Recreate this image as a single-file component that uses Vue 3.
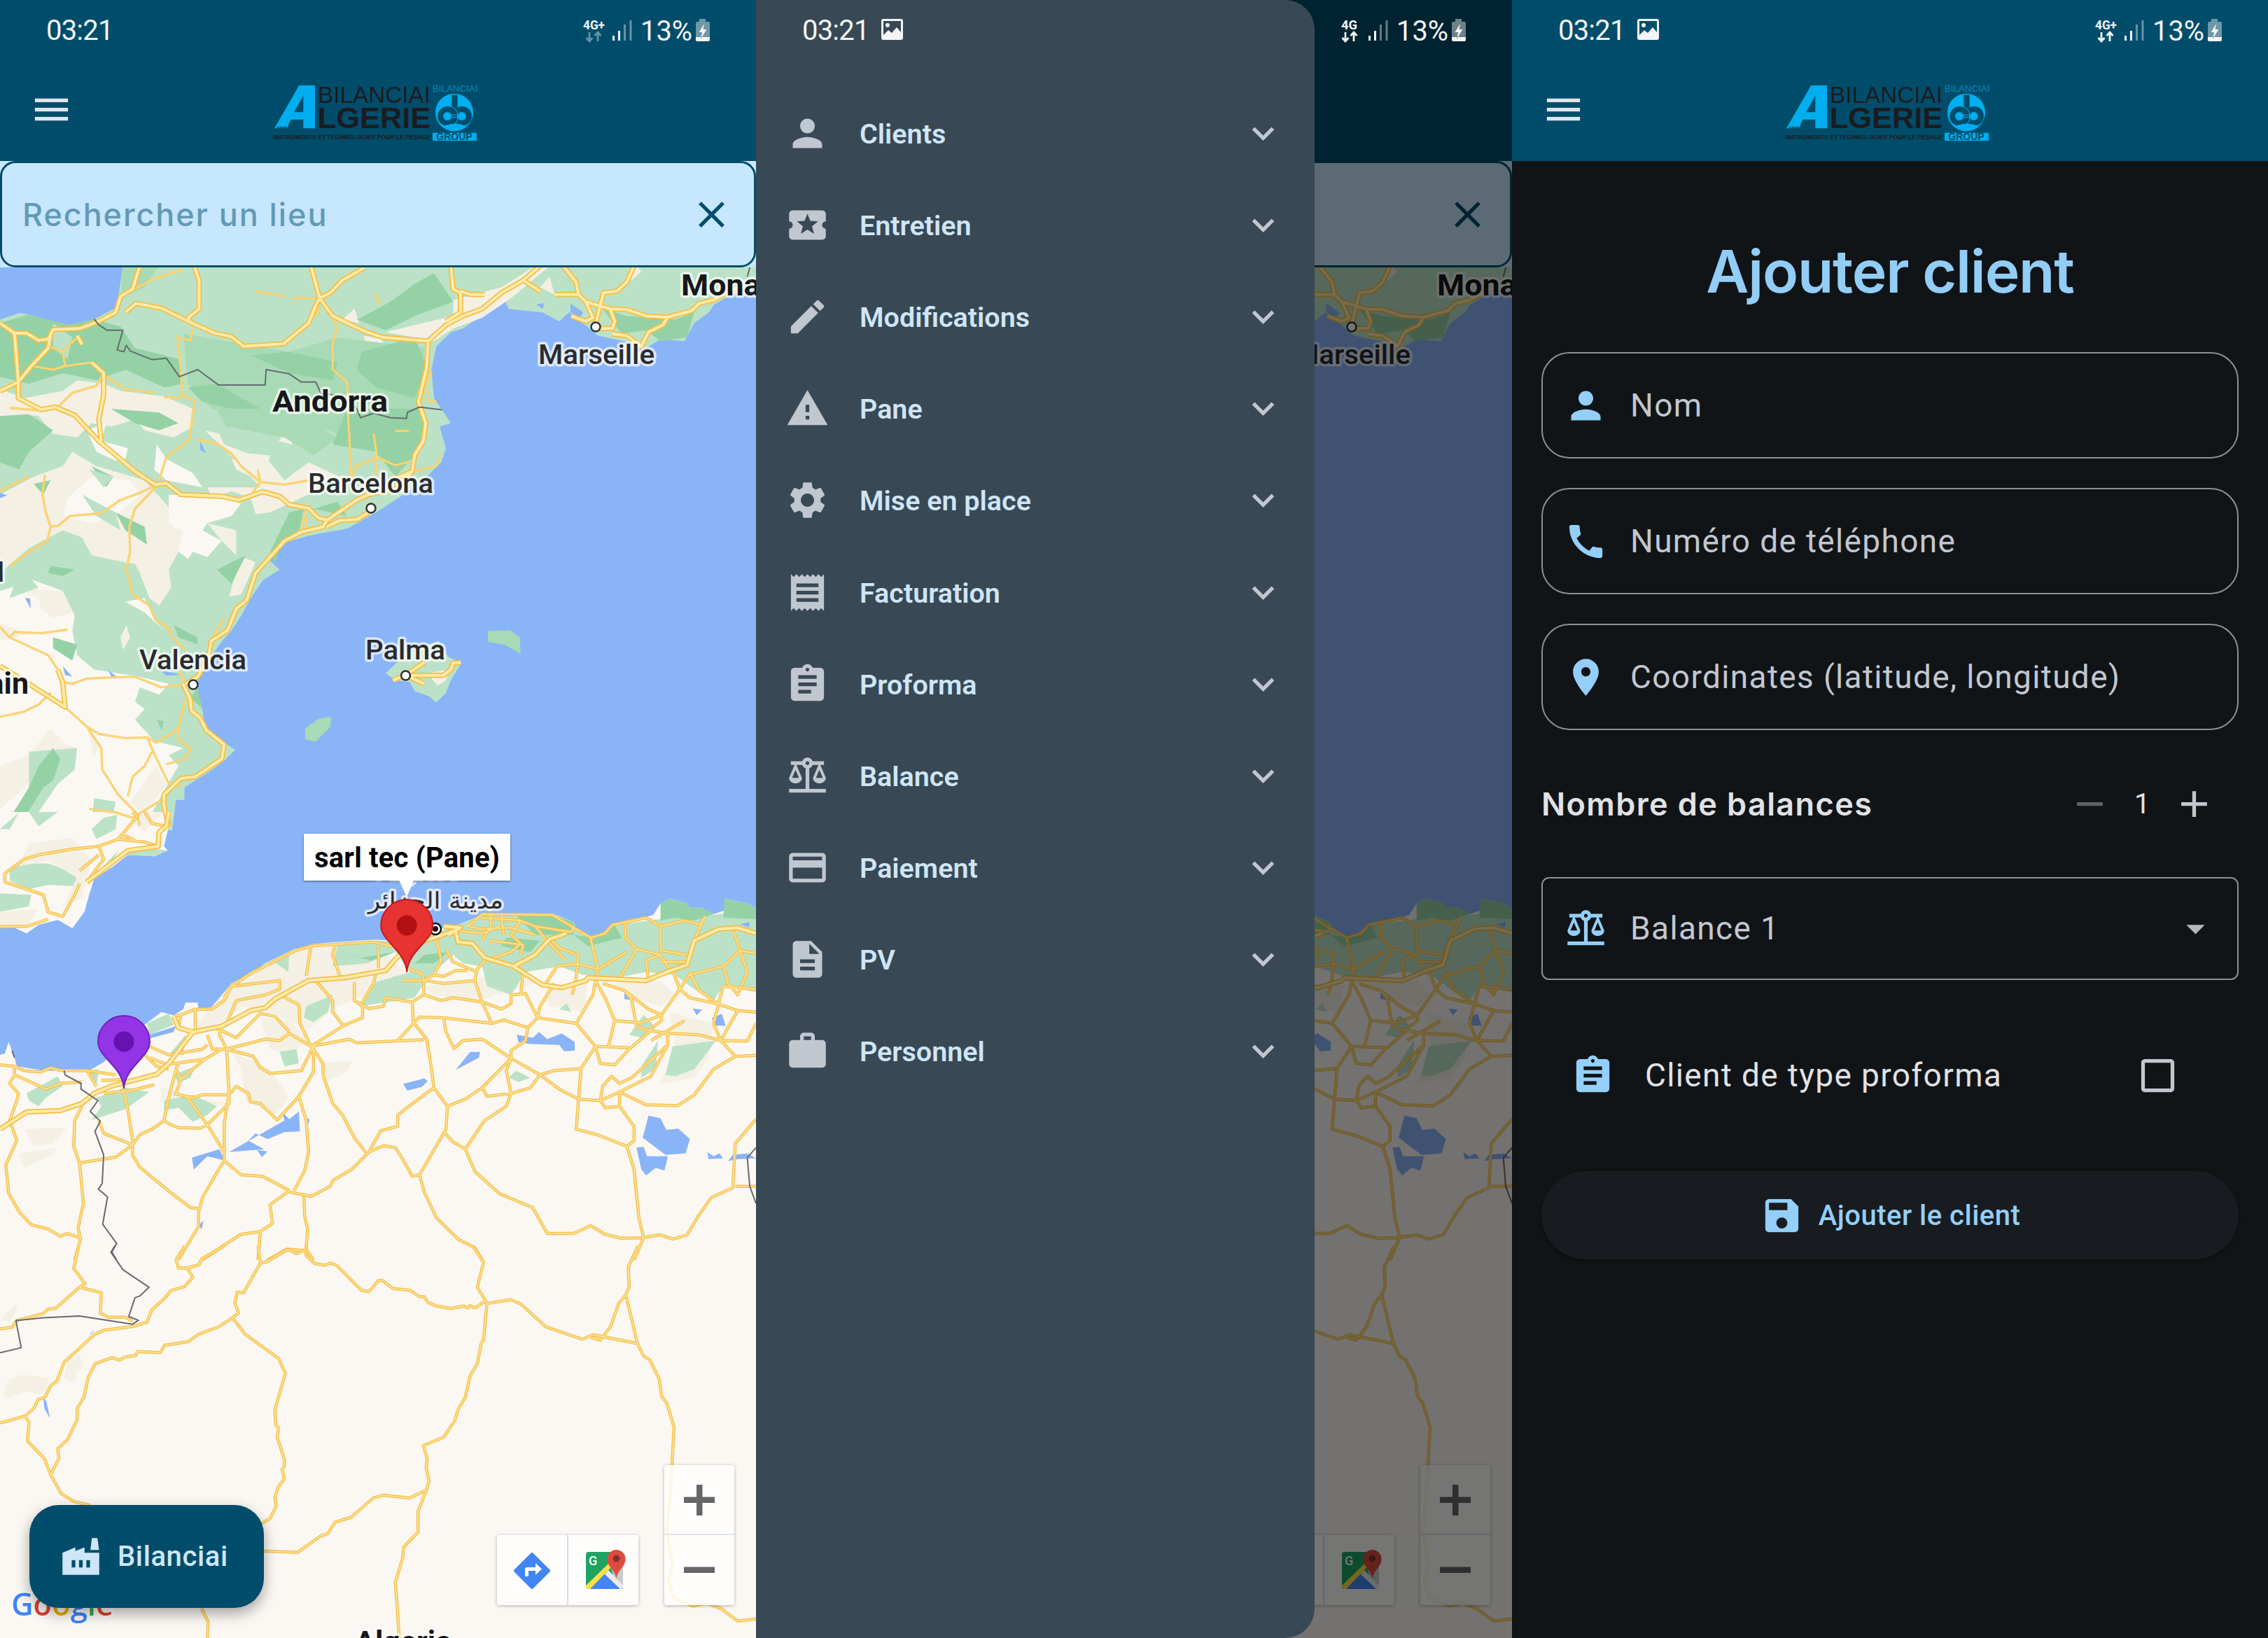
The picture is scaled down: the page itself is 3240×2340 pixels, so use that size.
<script setup>
const screens = [
  { id: 'map', picture: false, net: '4G+', idle: true },
  { id: 'drawer', picture: true, net: '4G', idle: false },
  { id: 'form', picture: true, net: '4G+', idle: false },
]

const icons = {
  person: 'M12 12c2.21 0 4-1.79 4-4s-1.79-4-4-4-4 1.79-4 4 1.79 4 4 4zm0 2c-2.67 0-8 1.34-8 4v2h16v-2c0-2.66-5.33-4-8-4z',
  ticket: 'M20 12c0-1.1.9-2 2-2V6c0-1.1-.9-2-2-2H4c-1.1 0-1.99.9-1.99 2v4c1.1 0 1.99.9 1.99 2s-.89 2-2 2v4c0 1.1.9 2 2 2h16c1.1 0 2-.9 2-2v-4c-1.1 0-2-.9-2-2zm-4.42 4.8L12 14.5l-3.58 2.3 1.08-4.12-3.29-2.69 4.24-.25L12 5.8l1.54 3.95 4.24.25-3.29 2.69 1.09 4.11z',
  edit: 'M3 17.25V21h3.75L17.81 9.94l-3.75-3.75L3 17.25zM20.71 7.04c.39-.39.39-1.02 0-1.41l-2.34-2.34c-.39-.39-1.02-.39-1.41 0l-1.83 1.83 3.75 3.75 1.83-1.83z',
  warning: 'M1 21h22L12 2 1 21zm12-3h-2v-2h2v2zm0-4h-2v-4h2v4z',
  settings: 'M19.14 12.94c.04-.3.06-.61.06-.94 0-.32-.02-.64-.07-.94l2.03-1.58c.18-.14.23-.41.12-.61l-1.92-3.32c-.12-.22-.37-.29-.59-.22l-2.39.96c-.5-.38-1.03-.7-1.62-.94l-.36-2.54c-.04-.24-.24-.41-.48-.41h-3.84c-.24 0-.43.17-.47.41l-.36 2.54c-.59.24-1.13.57-1.62.94l-2.39-.96c-.22-.08-.47 0-.59.22L2.74 8.87c-.12.21-.08.47.12.61l2.03 1.58c-.05.3-.09.63-.09.94s.02.64.07.94l-2.03 1.58c-.18.14-.23.41-.12.61l1.92 3.32c.12.22.37.29.59.22l2.39-.96c.5.38 1.03.7 1.62.94l.36 2.54c.05.24.24.41.48.41h3.84c.24 0 .44-.17.47-.41l.36-2.54c.59-.24 1.13-.56 1.62-.94l2.39.96c.22.08.47 0 .59-.22l1.92-3.32c.12-.22.07-.47-.12-.61l-2.01-1.58zM12 15.6c-1.98 0-3.6-1.62-3.6-3.6s1.62-3.6 3.6-3.6 3.6 1.62 3.6 3.6-1.62 3.6-3.6 3.6z',
  receipt: 'M18 17H6v-2h12v2zm0-4H6v-2h12v2zm0-4H6V7h12v2zM3 22l1.5-1.5L6 22l1.5-1.5L9 22l1.5-1.5L12 22l1.5-1.5L15 22l1.5-1.5L18 22l1.5-1.5L21 22V2l-1.5 1.5L18 2l-1.5 1.5L15 2l-1.5 1.5L12 2l-1.5 1.5L9 2 7.5 3.5 6 2 4.5 3.5 3 2v20z',
  clipboard: 'M19 3h-4.18C14.4 1.84 13.3 1 12 1c-1.3 0-2.4.84-2.82 2H5c-1.1 0-2 .9-2 2v14c0 1.1.9 2 2 2h14c1.1 0 2-.9 2-2V5c0-1.1-.9-2-2-2zm-7 0c.55 0 1 .45 1 1s-.45 1-1 1-1-.45-1-1 .45-1 1-1zm2 14H7v-2h7v2zm3-4H7v-2h10v2zm0-4H7V7h10v2z',
  balance: 'M13 7.83c.85-.3 1.53-.98 1.83-1.83H18l-3 7c0 1.66 1.57 3 3.5 3s3.5-1.34 3.5-3l-3-7h2V4h-6.17c-.41-1.17-1.52-2-2.83-2s-2.42.83-2.83 2H3v2h2l-3 7c0 1.66 1.57 3 3.5 3S9 14.66 9 13L6 6h3.17c.3.85.98 1.53 1.83 1.83V19H2v2h20v-2h-9V7.83zM20.37 13h-3.74l1.87-4.36L20.37 13zm-13 0H3.63L5.5 8.64 7.37 13zM12 6c-.55 0-1-.45-1-1s.45-1 1-1 1 .45 1 1-.45 1-1 1z',
  card: 'M20 4H4c-1.11 0-1.99.89-1.99 2L2 18c0 1.11.89 2 2 2h16c1.11 0 2-.89 2-2V6c0-1.11-.89-2-2-2zm0 14H4v-6h16v6zm0-10H4V6h16v2z',
  document: 'M14 2H6c-1.1 0-1.99.9-1.99 2L4 20c0 1.1.89 2 1.99 2H18c1.1 0 2-.9 2-2V8l-6-6zm2 16H8v-2h8v2zm0-4H8v-2h8v2zm-3-5V3.5L18.5 9H13z',
  work: 'M20 6h-4V4c0-1.11-.89-2-2-2h-4c-1.11 0-2 .89-2 2v2H4c-1.11 0-1.99.89-1.99 2L2 19c0 1.11.89 2 2 2h16c1.11 0 2-.89 2-2V8c0-1.11-.89-2-2-2zm-6 0h-4V4h4v2z',
  chevron: 'M16.59 8.59L12 13.17 7.41 8.59 6 10l6 6 6-6z',
  phone: 'M20.01 15.38c-1.23 0-2.42-.2-3.53-.56-.35-.12-.74-.03-1.01.24l-1.57 1.97c-2.83-1.35-5.48-3.9-6.89-6.83l1.95-1.66c.27-.28.35-.67.24-1.02-.37-1.11-.56-2.3-.56-3.53 0-.54-.45-.99-.99-.99H4.19C3.65 3 3 3.24 3 3.99 3 13.28 10.73 21 20.01 21c.71 0 .99-.63.99-1.18v-3.45c0-.54-.45-.99-.99-.99z',
  pin: 'M12 2C8.13 2 5 5.13 5 9c0 5.25 7 13 7 13s7-7.75 7-13c0-3.87-3.13-7-7-7zm0 9.5c-1.38 0-2.5-1.12-2.5-2.5s1.12-2.5 2.5-2.5 2.5 1.12 2.5 2.5-1.12 2.5-2.5 2.5z',
  save: 'M17 3H5c-1.11 0-2 .9-2 2v14c0 1.1.89 2 2 2h14c1.1 0 2-.9 2-2V7l-4-4zm-5 16c-1.66 0-3-1.34-3-3s1.34-3 3-3 3 1.34 3 3-1.34 3-3 3zm3-10H5V5h10v4z',
  menu: 'M3 18h18v-2H3v2zm0-5h18v-2H3v2zm0-7v2h18V6H3z',
  close: 'M19 6.41L17.59 5 12 10.59 6.41 5 5 6.41 10.59 12 5 17.59 6.41 19 12 13.41 17.59 19 19 17.59 13.41 12z',
  factory: 'M22 22H2V10l7-3v2l5-2v3h8v12zM21.9 8.5h-4.7L18 2h3l.9 6.5zM11 18h2v-4h-2v4zm-4 0h2v-4H7v4zm10-4h-2v4h2v-4z',
  minus: 'M19 13H5v-2h14v2z',
  plus: 'M19 13h-6v6h-2v-6H5v-2h6V5h2v6h6v2z',
  caret: 'M7 10l5 5 5-5z',
  checkbox: 'M19 5v14H5V5h14m0-2H5c-1.1 0-2 .9-2 2v14c0 1.1.9 2 2 2h14c1.1 0 2-.9 2-2V5c0-1.1-.9-2-2-2z',
}

const menu = [
  ['person', 'Clients'],
  ['ticket', 'Entretien'],
  ['edit', 'Modifications'],
  ['warning', 'Pane'],
  ['settings', 'Mise en place'],
  ['receipt', 'Facturation'],
  ['clipboard', 'Proforma'],
  ['balance', 'Balance'],
  ['card', 'Paiement'],
  ['document', 'PV'],
  ['work', 'Personnel'],
]

const fields = [
  ['person', 'Nom'],
  ['phone', 'Numéro de téléphone'],
  ['pin', 'Coordinates (latitude, longitude)'],
]

// The map is split into three horizontal bands, each with its own scale.
const bands = [
  {
    id: 'spain',
    transform: 'matrix(.68878 0 0 .5102 0 380)',
    areas: [
      ['#bbe2c6', 'M255 0L242 115 195 150 140 165 60 135 40 132 0 150V1580H357L365 1495H382L383 1460 400 1445 440 1410 465 1385 488 1355 460 1330 425 1290 420 1240 405 1170 435 1100 455 1060 480 1020 500 980 520 930 545 880 580 850 560 825 590 775 640 755 720 735 780 690 860 620 885 590 915 550 925 510 912 450 935 440 915 400 900 370 895 290 905 225 935 185 960 175 1010 130 1045 90 1055 120 1125 130 1160 155 1180 130 1205 155 1240 195 1310 215 1340 230 1370 205 1420 210 1440 160 1470 130 1480 110 1510 85 1568 60V0z'],
      ['#f4f0e4', 'M0 345L50 370 130 350 160 320 215 330 250 350 340 365 375 385 400 400 400 450 360 480 300 460 280 430 230 450 190 440 160 480 110 470 80 420 0 410zM200 560L150 520 130 560 70 590 0 640V860L60 790 130 740 170 760 190 810 260 830 350 850 365 790 350 750 360 690 300 600 250 580z'],
      ['#fbf8f3', 'M180 460L220 440 210 490 265 510 260 540 240 545 200 520zM325 500L345 540 400 580 420 620 345 600 320 570zM140 650L190 590 270 600 290 640 240 700 190 720 130 700zM350 640L460 650 500 665 480 700 430 720 420 740 460 770 430 815 400 800 390 820 360 790 375 750 350 720z'],
      ['#f4f0e4', 'M480 540L560 550 590 600 640 550 720 600 690 590 640 640 560 690 530 695 520 650 480 630 440 650 430 620 540 620 520 590 490 570zM425 460L455 470 465 500 515 525 560 530 555 565 500 555 470 520zM300 700L380 740 370 800 350 850 355 900 330 950 310 930 290 860 275 820zM0 410L40 400 60 420 0 430zM430 720L490 740 490 810 460 770z'],
      ['#fbf8f3', 'M0 910L70 880 130 910 155 980 150 1020 160 1090 195 1130 290 1150 350 1170 330 1200 290 1180 280 1220 300 1240 280 1270 320 1330 380 1350 350 1370 370 1400 340 1470 300 1568H0zM260 940L300 930 320 990 340 1020 300 970z'],
      ['#f4f0e4', 'M80 930L30 900 130 910 150 970 110 985 85 960zM262 1005L270 1040 255 1075 250 1040zM505 815L530 830 500 920 475 925 485 880zM0 1000L60 1030 0 1050zM0 1400L60 1370 100 1300 110 1300 135 1340 160 1350 150 1400 60 1450 0 1520zM325 1400L345 1450 300 1540 270 1500zM180 1290L210 1340 195 1370zM0 1540L60 1500 90 1568H0z'],
      ['#f4f0e4', 'M800 185L860 165 940 140 940 95 1040 60 1110 0 1140 0 1060 90 1000 145 940 175 900 210 860 200zM590 470L608 480 605 500 578 490zM735 120L745 160 710 150zM755 195L790 205 800 225 760 240zM1150 80L1140 30 1120 60zM1320 0L1330 15 1310 40 1300 30z'],
      ['#a8dab5', 'M380 190L600 240 700 200 880 230 870 380 840 470 700 470 600 420 440 400 390 330zM255 0L330 0 300 60 250 90zM440 380L600 400 700 480 650 530 590 480 470 450z'],
      ['#94d2a5', 'M0 160L60 135 140 165 195 150 250 170 280 230 370 260 380 330 340 340 260 290 200 320 130 300 60 330 0 310zM390 340L450 330 540 400 480 400 420 380zM520 250L600 240 700 270 690 320 600 300zM750 240L860 200 885 280 860 370 780 340 740 290zM720 400L880 400 880 500 820 590 780 520 690 500zM0 420L60 415 110 460 60 520 40 570 0 550zM740 150L810 100 860 50 900 20 940 100 860 140 800 180zM230 400L330 410 370 440 330 460 280 440zM1250 120L1300 140 1400 150 1440 130 1425 200 1370 210 1340 180 1290 190zM600 690L630 680 620 745 590 760 570 830 560 800zM240 690L300 730 305 780 260 740zM70 610L105 600 90 640zM105 840L155 850 130 868 100 860zM360 1005L410 1040 410 1060 370 1040zM110 1040L160 1060 150 1105 110 1070zM190 560L235 590 220 620zM510 810L480 890 450 850zM325 1270L340 1275 335 1300zM410 1180L420 1240 395 1210zM700 660L720 700 650 680z'],
      ['#bbe2c6', 'M60 1360L160 1350 155 1410 120 1450 60 1568H20L60 1470zM195 1490L240 1500 230 1568H190zM170 640L240 690 250 740 200 700zM60 870L80 900 20 930 30 890zM185 570L235 590 215 620zM110 160L150 200 140 260 110 230zM240 460L275 480 260 500z'],
      ['#94d2a5', 'M110 1350L125 1380 110 1440 90 1460 40 1568H10L60 1460 80 1400z'],
      ['#bbe2c6', 'M800 1140L850 1075 910 1050 930 1095 958 1110 935 1160 925 1195 905 1222 890 1205 860 1190 850 1165 820 1160z'],
      ['#f4f0e4', 'M885 1140L930 1130 925 1160 908 1175z'],
      ['#a8dab5', 'M1012 1022L1058 1020 1078 1040 1080 1085 1045 1060 1012 1052zM633 1295L660 1268 687 1262 685 1290 655 1332 633 1325z'],
      ['#8ab4f8', 'M415 490L428 525 415 515zM52 930L62 930 64 960zM130 1120L150 1150 135 1145zM225 1132L242 1150 232 1155zM330 1130L375 1145 345 1147zM0 635L15 642 0 650zM1183 105L1210 130 1200 150 1183 130zM1112 108L1128 104 1126 120z'],
    ],
    minor: 'M120 1130L100 1090 20 1040 0 1010M20 1040L30 1025 85 1028 140 1018M135 1235L180 1290 205 1310 260 1322 305 1320 325 1335 370 1295 385 1215M370 1295L372 1330 395 1350 385 1380 345 1395M305 1320L325 1380 350 1450 375 1455M180 1290L210 1350 212 1410 245 1480 285 1535 290 1568M185 1520L240 1530 275 1545 335 1495M315 1360L300 1400 275 1430 265 1485M130 1165L150 1170 180 1155 230 1152 280 1150 335 1180 390 1170M0 1262L50 1248 80 1228 105 1195M322 615L290 635 250 655 210 692 145 700 120 728 105 730 98 770 60 800 20 840M105 730L95 690 88 640 93 585M0 630L60 590M322 620L280 680 268 730 270 800 262 850 275 920 310 950 322 990 350 1015 355 1035 385 1075M330 600L345 535 393 485 400 410 405 380 378 360 375 290 368 200 395 208 400 175M410 487L450 497 480 525 500 560 540 605 525 632M540 605L535 570M540 605L590 612 640 600M692 140L698 175 690 220 690 290 720 325 722 420 728 560 728 600M775 470L782 535 740 560 728 600M782 535L820 558 850 548M780 535V590M820 462L848 462M210 300L260 345 320 355M340 368H378M20 397L85 405M120 395L150 355 200 335 215 300M530 70L590 85M605 90L663 90 658 140M778 75L788 108M250 85L320 35 380 10M65 280L110 290 135 280 190 270M135 280L130 240 100 225M160 200L130 240M855 575L905 560 912 535M870 370L905 380M885 290L895 300 880 340 890 360M625 745L632 690 638 745M465 985L438 1050M370 1130L385 1170',
    major: 'M0 160L30 188 55 188 80 208 100 205 110 178 165 175 205 155 240 130 250 85 275 65 290 0M260 130L282 105 335 118 395 158 445 188 480 198 505 225 588 218 640 160 655 110 663 90M645 0L663 90M755 5L710 40 685 75 663 90 690 140 760 185 795 200 888 210M403 0L413 40V120L390 145 395 158M1120 0L1085 40 1040 75 1000 120 960 140 925 165 888 210 885 285 868 380 883 440 878 490 860 530 855 575 820 595M935 0L940 65 955 75V130L925 155M955 70L975 80H1005M1085 40L1120 70M1150 80H1200L1215 100 1265 120 1300 122 1340 140 1385 143 1435 125 1450 105 1480 95 1530 60M1168 0L1195 45 1200 80M1315 0L1300 45 1280 70 1252 75 1245 110 1235 165M1185 140L1215 155 1230 145 1215 100M1240 175L1270 175 1275 155 1265 120M1270 190L1300 195 1330 225 1345 185 1375 165 1385 143M30 188L35 270 38 325 38 370 85 402 115 395 155 418 205 490 280 575 322 612 345 608 375 640 460 645 495 655 545 632 580 645 600 668 640 678 660 705 678 712 740 655 765 640 820 625 855 575M38 325L65 280 100 230 105 195M38 325L0 350M160 195L170 220M190 270L215 300V360L205 430 210 490M678 712L670 730 625 745 590 770 530 860 512 935 490 960 472 1020 438 1050 432 1100 410 1150 385 1170M678 730L705 712 740 710 765 690M380 1170L395 1215 397 1245 415 1265 428 1300 465 1340 460 1380 405 1430 375 1435 340 1480V1510L350 1568M0 1120L60 1170 135 1235 130 1165 120 1130M815 1160L841 1146 880 1110M841 1146H920L935 1130 940 1112 955 1110M841 1146L880 1170',
    border: 'M195 148L205 165 222 180 255 180 243 235 257 240 262 222 270 238 315 262 345 258 372 310 410 290 453 333H550L552 290 600 302 625 325 655 325 665 355 710 365 740 400 748 425 775 412 810 425 843 427 845 410 870 395 917 403M1550 30L1556 0',
  },
  {
    id: 'algeria',
    transform: 'matrix(.68878 0 0 .40816 0 1160)',
    areas: [
      ['#fbf8f3', 'M357 0L340 120 348 135 320 155 265 150 235 190 195 235 185 290 175 350 150 407 120 378 80 395 55 425 30 405H0V0z'],
      ['#bbe2c6', 'M20 200L50 180 100 180 160 215 155 260 100 255 60 270 20 240zM0 285L65 290 60 330 0 350zM190 60L215 20 243 10 240 60 200 95zM0 60L40 0 20 60zM60 0H120L80 50zM215 190L245 135 232 180zM255 150L300 125 348 135 320 155z'],
      ['#f4f0e4', 'M60 110L150 90 190 170 170 300 130 330 160 230 100 170 40 190zM0 350L80 340 60 390 0 400zM255 10L340 0 300 70z'],
      ['#fbf8f3', 'M0 850L10 845 18 805 30 860 35 890 90 905 130 905 180 910 215 875 240 840 255 780 300 745 335 700 360 712 380 690 385 667H410L412 690 450 680 465 640 480 600 520 565 550 530 610 480 650 462 700 455 775 447 830 450 900 435 905 415 935 395 970 395 1000 355H1145L1190 385 1195 415 1230 440 1255 425 1275 395 1320 378 1355 360 1370 320 1390 303 1425 320 1430 335 1455 335 1480 358 1510 340 1503 303 1550 320 1568 340V3000H0z'],
      ['#f4f0e4', 'M480 600L520 565 610 480 780 460 840 560 760 640 700 680 640 760 560 700 500 680 460 740 400 760zM540 720L600 730 640 800 600 850 560 830zM480 840L560 900 600 1000 570 1060 510 1010 500 900zM660 880L730 870 720 910 680 940zM50 1110L138 1105 110 1160 70 1170zM40 1195L120 1175 110 1200 50 1245zM880 610L1080 560 1110 600 990 660 900 640zM1130 620L1220 600 1210 700 1140 680zM1270 600L1370 590 1400 640 1370 680 1300 640zM1390 700L1480 740 1470 860 1440 930 1370 950 1400 820zM330 960L400 1000 480 1020 400 1040 340 1020z'],
      ['#bbe2c6', 'M700 465L780 450 850 455 940 400 1000 360 1145 357 1190 385 1195 415 1230 440 1275 395 1370 375 1400 340 1480 360 1568 340V630L1500 610 1480 660 1440 620 1400 570 1340 560 1280 580 1210 570 1160 540 1090 560 1060 640 1010 610 1000 540 960 530 940 500 900 560 880 600 860 650 750 680 770 600 850 560 820 490 760 530 690 540zM635 680L690 640 680 700 650 735 630 720zM565 520L600 490 598 560zM305 740L350 705 360 745 310 780zM200 1000L260 965 310 980 260 1040 190 1078 210 1030zM340 1010L400 990 450 1030 430 1060 400 1085 370 1035 340 1045zM55 985L120 925 130 960 95 1000 80 1030 60 1010zM180 910L205 900 200 960zM1335 710L1355 745 1330 790 1305 780zM1330 890L1365 800 1360 900 1330 930zM1395 820L1485 800 1440 900 1400 925 1380 920zM1055 930L1070 905 1100 930 1075 945zM1160 690L1175 670 1185 700zM580 840L615 830 620 880 590 890zM360 920L405 890 395 930 370 950zM350 850L385 780 380 850z'],
      ['#94d2a5', 'M1370 380L1370 320 1390 303 1425 320 1430 335 1455 335 1480 358 1440 380 1400 370zM1503 303L1550 320 1568 340V375L1500 370zM1070 360H1145L1190 385 1190 430 1110 430zM1190 430L1230 440 1275 395 1290 440 1220 470zM1050 440L1120 450 1100 490 1040 470zM880 500L930 490 900 530 860 530zM700 490L770 520 820 490 750 510z'],
      ['#8ab4f8', 'M310 780L365 750 360 770 312 792zM475 1190L590 1080 585 1050 600 1075 620 1048 622 1118 590 1120 555 1145 530 1125 515 1150 548 1180zM398 1210L455 1180 467 1220 430 1205 402 1252zM533 1182L555 1188 543 1208zM632 1070L642 1075 640 1092zM1072 780L1105 790 1118 770 1135 795 1165 775 1192 805V835L1170 838 1160 815 1100 812 1075 805zM945 903L975 840 996 840 993 860zM836 952L880 932 887 942 875 962 845 975zM1345 1063L1370 1072 1382 1113 1407 1108 1431 1145 1422 1195 1380 1200 1333 1140zM1320 1175L1335 1172 1342 1205 1385 1205 1382 1230 1378 1255 1360 1245 1340 1272 1330 1250zM1467 1190L1480 1205 1492 1195 1500 1212 1470 1215zM1510 1222L1520 1200 1550 1195 1568 1212 1530 1215zM1295 630L1305 635 1308 658 1295 655zM1437 688L1456 692 1445 712zM1477 720L1497 706 1505 748 1480 748zM1535 392L1555 385 1553 405zM413 1445L422 1430 418 1462z'],
    ],
    minor: 'M465 650L480 610 520 565 555 535 615 483 650 468 775 455 825 475M645 470L635 575M695 465L690 500 705 575M785 470V545M405 690L375 710 360 715M405 690L440 690 465 660 480 610 580 590V620L550 640 490 660 470 740M405 690L405 770M375 710L370 755M0 885L30 890 50 905 85 910 105 895 125 905 180 905 200 960M30 890V920L70 950 95 970 125 950 170 945M30 920L20 950 38 985 35 1010 20 1080 35 1150 12 1235 18 1335 40 1400 65 1445 100 1460 125 1485 140 1475 165 1490M170 1030L155 1080 153 1170 165 1230 173 1370 162 1455 167 1495 155 1568M255 965L265 1040 275 1150 275 1200 290 1243 320 1285 360 1340 395 1385 412 1388M205 1080L215 1125 275 1165 240 1208 165 1228M275 1165L290 1130 315 1110 340 1080 355 1095 370 1105 415 1107 430 1095 475 1020 475 985 470 830M340 1080L350 1000 365 900 370 880M365 985L390 1000 430 1095 465 1190 465 1220 500 1270 545 1275 600 1325M465 1220L440 1290 420 1350 412 1400 412 1450 370 1568M475 985L465 1090V1220M360 985L400 1000 420 990 475 990 490 960 515 985 520 1015 540 1020 575 1078 620 995 650 910V820M470 830L550 795 580 800 600 775 645 820M470 830L525 855 540 895 560 915 625 905 650 820M440 750L490 790 540 705 570 715 600 770M470 830L455 780 460 750M580 640L620 675 622 740 645 820M655 590L690 660V700L712 748 645 820M712 748L752 720V680L735 660V595M645 820L725 795 740 808 880 797M650 830L670 880V920L690 1020 710 1060 735 1140 760 1195M620 995L635 1080 640 1190 632 1255 610 1325M825 800L860 735 870 718 920 720 1020 740 1045 728 1095 755M855 665L857 735 885 795 895 900 900 965 928 1030 925 1110 870 1270M855 665L800 650 795 680 765 688 735 660M780 560L775 600 750 670M900 965L840 1040 825 1060V1100L790 1115 765 1190M765 1190L795 1168 820 1175 835 1215 855 1275 870 1270 880 1330 905 1420 950 1495 985 1525 1000 1568M765 1190L730 1250 690 1290 685 1310 645 1345 600 1330M600 1325L560 1375 565 1440 540 1468 500 1478 470 1510 420 1568M630 1345L632 1415 638 1460 635 1530 650 1568M540 1468L535 1568M555 1568L595 1530 635 1535M920 720L925 770 942 828 960 800 1000 795 1060 862 1060 835 1090 800 1095 755 1115 720 1120 680 1150 600M920 1120L940 1155 965 1180 985 1258 1035 1335 1105 1385 1135 1475 1190 1475 1225 1448 1255 1478 1290 1492 1330 1490 1370 1480 1395 1495 1425 1480 1450 1410 1475 1350 1520 1315 1525 1160 1568 1075M928 1030L965 1005 1000 965 1060 862 1050 905 1060 985 1050 1030 1005 1080 965 1180M1000 965L1010 995 1060 985 1100 965 1120 920 1060 862M1120 920L1150 905 1205 898 1235 820 1195 740 1115 720M1120 920L1160 970 1200 1005 1195 1110 1240 1130 1300 1170 1315 1250 1325 1420 1335 1490 1315 1568M1205 898L1200 1005 1245 1010 1285 980 1340 1025 1405 1028 1440 990 1480 900 1525 855 1568 852M1245 1010L1250 960 1268 925 1285 950 1310 930 1385 815 1385 775 1350 765 1305 830 1275 885 1245 880 1235 820M1285 980L1350 925 1385 815M1285 980V1030L1315 1100V1150L1300 1170M1245 1010L1255 1035 1285 1030M1235 820L1305 825M1195 740L1230 640 1235 590M1235 590L1255 650 1275 730 1262 820M1250 600L1295 625 1345 690 1372 710 1372 730 1345 765M1275 730L1330 738 1372 710 1410 620 1395 555M1295 625L1310 655 1320 750 1345 765M1385 775L1450 780 1495 800 1525 855M1410 620L1430 650 1490 672 1530 695 1568 700M1495 800L1530 695M1495 800L1550 802 1568 740M1490 672L1480 740 1495 800M1430 560L1450 625 1490 672 1500 610 1568 620M880 590L878 640 855 665M835 590H880L920 600 985 590 1000 665 1020 740M880 640L915 660 940 650 1000 665 1040 690 1060 670V640L1090 635 1115 720M985 590L990 550 1005 520M905 440L915 520 900 570 880 590M970 555L945 555 920 575 900 570M850 550L875 565 880 590M925 480L940 525 990 560M1085 560L1080 640M1000 370L1080 380 1110 400 1185 420 1190 405 1145 360 1000 358 970 400M1018 360V400L1000 450M1080 380L1060 430 1080 460 1060 490 1015 515M1110 400L1130 440 1170 515M970 400L1000 410 1060 405 1110 430M1015 450L1085 465 1080 500M950 415L1000 425 1035 400M1040 360L1045 430M1190 405L1225 440 1255 425 1270 395 1340 370 1370 400 1420 380 1455 395 1462 365M1297 385V440L1320 480 1300 540 1280 590M1370 400V485L1425 500M1225 440L1230 480 1240 550 1235 590M1440 450L1462 365M1520 410L1535 485 1500 540 1430 570 1410 620M1535 485L1568 495M1535 485L1550 560 1530 640 1510 600 1500 540M1320 480L1370 500 1340 520 1345 590M1300 490L1240 550M1195 530L1240 550M1140 445L1165 480 1200 500 1195 580 1187 640M1370 500L1390 555M1370 525L1425 525M1155 540L1200 530M1130 605L1155 540M275 0L285 15 245 95 205 120 150 130 85 148 50 165 10 215V245L90 290 100 350 130 365 155 290 165 250M205 120L215 165 180 245M0 402L55 400 100 375M300 0L315 40 345 50M245 95L300 105 328 120M255 80L280 100M165 205L205 150M310 820L350 850 420 830 430 815M310 860L340 880 365 880 425 865 460 830M300 850L325 890 350 900M180 905L240 920M210 940L260 935M320 955L270 975 215 985M365 900L375 935 365 985M425 865L375 935M430 780L440 830 470 830M1350 800L1420 730M1525 1310H1568',
    major: 'M0 1110L55 1050 125 1045 170 1020 195 985 230 960 275 940 325 918 350 880 400 770 460 750 520 695 550 685 570 655 640 590 715 580 800 555 820 515 850 470 900 440 945 415 950 455 980 460 1005 510 1065 540 1125 605 1165 615 1215 590 1220 580 1340 590 1390 555 1425 535 1440 450 1490 410 1530 405 1568 425M1065 540L1110 500 1140 445 1175 425M400 770L370 755 360 715M350 0L345 50 330 70 328 120 265 135 180 245M920 400L955 405 930 430',
    border: 'M25 835L30 860M133 905L135 920 168 950V970L203 1010 187 1048 208 1082 197 1118 215 1200 212 1300 204 1320 223 1347 213 1443 242 1510 232 1540 242 1568M1568 1175L1550 1210 1555 1310 1568 1370',
  },
  {
    id: 'sahara',
    transform: 'matrix(.68878 0 0 .35714 0 1780)',
    areas: [
      ['#f4f0e4', 'M8 600L15 540 45 515 100 525 98 570 85 595 60 580 15 608zM132 530L140 460 165 435 174 480 155 510 157 545zM0 290L35 232 38 245 20 305z'],
      ['#8ab4f8', 'M90 610L96 620 104 690 92 650zM185 355L196 333 190 350z'],
    ],
    minor: 'M163 0L153 90 176 150 165 165 210 187 208 268 225 285 260 285 275 300M165 165L115 250 100 252 90 270 35 298 25 325 0 332M383 0L365 55 370 88 388 88 400 125 383 162 355 178 340 212 315 255 305 305 275 322 215 337 195 355 133 465 118 540 105 560 92 608 80 612 70 650 52 680 0 708M388 88L413 75 418 52 465 0M52 680L60 705 57 780 92 850 105 915 127 990 153 1022 187 1037M105 915L122 850 120 810 140 775 160 695V650L174 605 183 525 198 470 232 447 248 457 258 445 282 437 285 422 332 426 342 397 390 383 412 353 455 322 482 287M535 0L540 68 505 187 492 185 487 228 495 268 482 287 508 352 578 450 592 510 570 655 572 715 578 730 575 765 590 855V880L585 895 590 930 577 965 570 1005 573 1040 560 1090 543 1110M540 68L550 66 597 14 615 30 633 15 635 38 653 70 673 77 685 68 698 77 750 178 765 182 785 138H793L815 170 850 177 870 203H880L887 225 905 240 935 250 962 240 970 248 975 238 985 248 1005 222M1010 230L1060 215 1080 232 1132 323 1207 373 1230 355 1322 390M633 15L636 0M980 0L1003 65 990 165 1010 230 1007 290 1003 375 998 390 990 470 975 520 965 605 950 655 943 700 920 765 878 798 886 850 884 885 890 940 885 975 867 1062V1145L837 1205 835 1250 820 1345 825 1480 828 1568M885 975L850 1008 795 997 775 1007 728 1085 695 1105 680 1150 665 1160 617 1226 547 1220M1323 0L1303 85 1305 165 1298 195 1283 230 1267 320 1245 377 1225 365M1298 195L1322 390 1335 440 1348 457 1367 530 1372 600 1383 628 1398 725 1390 1000 1383 1130 1395 1280 1387 1345 1398 1410 1438 1440 1465 1428 1495 1450 1530 1500 1568 1492M418 1450L432 1505 430 1568',
    major: '',
    border: 'M238 0L230 25 255 95 309 165 290 200 280 207 267 282 287 297 275 313 165 280 90 287 33 298 44 407 0 427',
  },
]

const towns = [
  [851, 467], [530, 726], [276, 978], [579.5, 965],
]

const labels = [
  { t: 'Marseille', x: 769, y: 520, w: 166 },
  { t: 'Barcelona', x: 440, y: 704, w: 179 },
  { t: 'Valencia', x: 199, y: 956, w: 153 },
  { t: 'Palma', x: 522, y: 942, w: 114 },
  { t: 'Andorra', x: 389, y: 588, w: 165, big: true },
]

const pins = [
  { x: 581.2, y: 1389, fill: '#e73332', edge: '#c01c22', dot: '#b11211' },
  { x: 177, y: 1555, fill: '#9334e6', edge: '#7322b9', dot: '#6512b0' },
]
</script>

<template>
  <main class="board">
    <section v-for="s in screens" :key="s.id" class="screen" :class="'is-' + s.id">
      <header class="top">
        <div class="status">
          <span class="clock">03:21</span>
          <svg v-if="s.picture" class="picture" viewBox="0 0 31 30">
            <path fill="#f4f5f7" fill-rule="evenodd" d="M3 0H28a3 3 0 0 1 3 3V27a3 3 0 0 1-3 3H3a3 3 0 0 1-3-3V3A3 3 0 0 1 3 0zM3 3V23L10 16 15 20 22 12 28 19V3zM9 6a3 3 0 1 1 0 6 3 3 0 0 1 0-6z" />
          </svg>
          <svg class="radio" viewBox="0 0 190 40">
            <text :x="s.net === '4G' ? 6 : 3" y="20.500" :textLength="s.net === '4G' ? 23 : 31" lengthAdjust="spacingAndGlyphs" class="net">{{ s.net }}</text>
            <path :class="{ dim: s.idle }" class="arrows" d="M12 25V37M7.500 33L12 38 16.500 33M24 38V26M19.500 30L24 25 28.500 30" />
            <path fill="#f4f5f7" d="M45 30h3v7h-3zM53 23h3v14h-3z" />
            <path fill="#f4f5f7" opacity=".42" d="M61 14h3v23h-3zM69.500 8h3v29h-3z" />
            <text x="85" y="37" class="percent" textLength="74" lengthAdjust="spacingAndGlyphs">13%</text>
            <path fill="#f4f5f7" opacity=".45" d="M169 6h9v4h4a2 2 0 0 1 2 2V32H164V12a2 2 0 0 1 2-2h3z" />
            <path fill="#f4f5f7" d="M164 32h20v4a2 2 0 0 1-2 2h-16a2 2 0 0 1-2-2zM176 13l-7.500 12h4.500l-1.500 9 8-13h-5z" />
          </svg>
        </div>
        <div class="appbar">
          <svg class="icon burger" viewBox="0 0 24 24"><path :d="icons.menu" /></svg>
          <svg class="logo" viewBox="0 0 990 360">
            <path fill="#00aeef" d="M172 66H240V250H190V212H137L120 248 113 240 108 248 103 240 98 248 92 240 87 248 80 240 76 250H66zM190 110L150 181H190z" />
            <g fill="#1b1c20">
              <text x="252" y="140" font-size="101" textLength="483" lengthAdjust="spacingAndGlyphs">BILANCIAI</text>
              <text x="251" y="248" font-size="130" font-weight="700" textLength="485" lengthAdjust="spacingAndGlyphs">LGERIE</text>
              <text x="61" y="298" font-size="27" font-weight="700" textLength="673" lengthAdjust="spacingAndGlyphs">INSTRUMENTS ET TECHNOLOGIES POUR LE PESAGE</text>
            </g>
            <text x="744" y="94" font-size="39" fill="#0587b9" textLength="193" lengthAdjust="spacingAndGlyphs">BILANCIAI</text>
            <circle cx="837" cy="182" r="81" fill="#00aeef" />
            <g fill="#004d6b">
              <path d="M826 106H851V170H826z" />
              <circle cx="808" cy="198" r="42" />
              <circle cx="870" cy="198" r="42" />
            </g>
            <g fill="#00aeef">
              <circle cx="807" cy="198" r="18" />
              <circle cx="869" cy="198" r="18" />
              <path d="M820 191H858V194H820zM820 202H858V205H820z" />
              <path d="M795 238Q840 222 885 238L870 256H806z" />
            </g>
            <path d="M826 157Q852 170 852 198T830 240" fill="none" stroke="#00aeef" stroke-width="3" />
            <path fill="#00aeef" d="M744 269H933V303H744z" />
            <text x="760" y="300" font-size="42" font-weight="700" fill="#004d6b" textLength="154" lengthAdjust="spacingAndGlyphs">GROUP</text>
          </svg>
        </div>
      </header>

      <template v-if="s.id !== 'form'">
        <div class="search">
          <div class="search-box">
            <span class="poppins hint">Rechercher un lieu</span>
            <svg class="icon" viewBox="0 0 24 24"><path :d="icons.close" /></svg>
          </div>
        </div>
        <div class="map">
          <svg class="terrain" viewBox="0 382 1080 1958">
            <path fill="#8ab4f8" d="M0 380H1080V2340H0z" />
            <g v-for="b in bands" :key="b.id" :transform="b.transform">
              <path v-for="(a, i) in b.areas" :key="i" :fill="a[0]" :d="a[1]" />
            </g>
            <g v-for="b in bands" :key="b.id + '-roads'" :transform="b.transform" class="lines">
              <path :d="b.minor" class="minor-edge" :class="b.id" />
              <path :d="b.minor" class="minor" :class="b.id" />
              <path :d="b.major" class="major-edge" />
              <path :d="b.major" class="major" />
              <path :d="b.border" class="border" />
            </g>
            <circle v-for="(c, i) in towns" :key="i" :cx="c[0]" :cy="c[1]" r="6.500" fill="#fff" stroke="#333" stroke-width="2.500" />
            <g class="labels">
              <text v-for="l in labels" :key="l.t" :x="l.x" :y="l.y" :textLength="l.w" lengthAdjust="spacingAndGlyphs" :class="{ big: l.big }">{{ l.t }}</text>
              <text x="973" y="422" class="big" textLength="162" lengthAdjust="spacingAndGlyphs">Monaco</text>
              <text x="41" y="991" class="big" text-anchor="end">Spain</text>
              <text x="6" y="831" text-anchor="end">Madrid</text>
              <text x="507" y="2360" class="big">Algeria</text>
              <text x="538" y="1256">Algiers</text>
              <text x="526" y="1298" class="arabic" textLength="193" lengthAdjust="spacingAndGlyphs">مدينة الجزائر</text>
            </g>
            <circle cx="622" cy="1327" r="8" fill="#fff" stroke="#111" stroke-width="2.500" />
            <circle cx="622" cy="1327" r="4" fill="#111" />
            <g v-for="p in pins" :key="p.x" :transform="`translate(${p.x} ${p.y})`">
              <path :fill="p.fill" :stroke="p.edge" stroke-width="2" d="M0 0C-2-32-37-44-37-67A37 37 0 0 1 37-67C37-44 2-32 0 0z" />
              <circle cy="-67" r="14.500" :fill="p.dot" />
            </g>
            <g class="google">
              <text x="16" y="2308" textLength="146" lengthAdjust="spacingAndGlyphs"><tspan fill="#4285f4">G</tspan><tspan fill="#db4437">o</tspan><tspan fill="#e8b008">o</tspan><tspan fill="#4285f4">g</tspan><tspan fill="#34a853">l</tspan><tspan fill="#db4437">e</tspan></text>
            </g>
          </svg>
          <div class="bubble">sarl tec (Pane)</div>
          <div class="fab">
            <svg class="icon" viewBox="0 0 24 24"><path :d="icons.factory" /></svg>
            <span>Bilanciai</span>
          </div>
          <div class="links">
            <svg viewBox="0 0 100 100">
              <path fill="#4285f4" stroke="#4285f4" stroke-width="4" stroke-linejoin="round" d="M50 27L74 51 50 75 26 51z" />
              <path fill="#fff" d="M40 59V49a3 3 0 0 1 3-3H55V40L64 48.500 55 57V51H45V59z" />
            </svg>
            <svg viewBox="0 0 100 100">
              <rect x="25" y="24" width="53" height="53" rx="4" fill="#1ea362" />
              <path fill="#c9cacb" d="M60 42L78 36V73L66 66z" />
              <path fill="#4285f4" d="M52 55L74 77H29z" />
              <path fill="#ececed" d="M57 50L78 72V73a4 4 0 0 1-4 4L52 56z" />
              <path fill="#fde047" d="M25 72L58 40 61 46 31 77H29a4 4 0 0 1-4-4z" />
              <text x="29" y="42.500" fill="#fff" font-family="Roboto, sans-serif" font-size="18" font-weight="500">G</text>
              <path fill="#dd4b3e" d="M68.500 63C67.500 50 55.500 46 55.500 34A13 13 0 0 1 81.500 34C81.500 46 69.500 50 68.500 63z" />
              <circle cx="68.500" cy="33.500" r="4.800" fill="#822f2b" />
            </svg>
          </div>
          <div class="zoom">
            <svg viewBox="0 0 100 100"><path fill="#666" d="M28 45.500H46V28h8.500V45.500H72V54H54.500V72H46V54H28z" /></svg>
            <svg viewBox="0 0 100 100"><path fill="#666" d="M28 45.500H72V54H28z" /></svg>
          </div>
        </div>
      </template>

      <template v-if="s.id === 'drawer'">
        <div class="scrim"></div>
        <nav class="drawer">
          <div v-for="m in menu" :key="m[1]" class="item">
            <svg class="icon" viewBox="0 0 24 24"><path :d="icons[m[0]]" /></svg>
            <span>{{ m[1] }}</span>
            <svg class="icon" viewBox="0 0 24 24"><path :d="icons.chevron" /></svg>
          </div>
        </nav>
      </template>

      <div v-if="s.id === 'form'" class="form">
        <h1 class="poppins">Ajouter client</h1>
        <div v-for="f in fields" :key="f[1]" class="field">
          <svg class="icon" viewBox="0 0 24 24"><path :d="icons[f[0]]" /></svg>
          <span>{{ f[1] }}</span>
        </div>
        <div class="counter">
          <span class="poppins">Nombre de balances</span>
          <div class="stepper">
            <svg class="icon off" viewBox="0 0 24 24"><path :d="icons.minus" /></svg>
            <b>1</b>
            <svg class="icon" viewBox="0 0 24 24"><path :d="icons.plus" /></svg>
          </div>
        </div>
        <div class="field select">
          <svg class="icon" viewBox="0 0 24 24"><path :d="icons.balance" /></svg>
          <span>Balance 1</span>
          <svg class="icon caret" viewBox="0 0 24 24"><path :d="icons.caret" /></svg>
        </div>
        <div class="check">
          <svg class="icon" viewBox="0 0 24 24"><path :d="icons.clipboard" /></svg>
          <span>Client de type proforma</span>
          <svg class="icon box" viewBox="0 0 24 24"><path :d="icons.checkbox" /></svg>
        </div>
        <button class="submit" type="button">
          <svg class="icon" viewBox="0 0 24 24"><path :d="icons.save" /></svg>
          <span>Ajouter le client</span>
        </button>
      </div>
    </section>
  </main>
</template>

<style>
body {
  background: #101417;
}
</style>

<style scoped>
.board {
  display: flex;
  width: 3240px;
  height: 2340px;
  overflow: hidden;
  font-family: Roboto, sans-serif;
}
.screen {
  position: relative;
  display: flex;
  flex-direction: column;
  width: 1080px;
  height: 2340px;
  overflow: hidden;
  background: #101417;
}
.icon {
  display: block;
  flex: none;
  width: 63px;
  height: 63px;
  fill: currentColor;
}
.poppins {
  font-family: Inter, sans-serif;
}
.top {
  flex: none;
  height: 230px;
  background: #004d6b;
}
.status {
  display: flex;
  align-items: center;
  height: 83px;
  padding: 0 64px 0 66px;
  color: #f4f5f7;
}
.is-drawer .status {
  position: relative;
  z-index: 3;
}
.clock {
  font-size: 40px;
  line-height: 47px;
  letter-spacing: -0.8px;
  margin-top: 3px;
}
.picture {
  width: 31px;
  height: 30px;
  margin-left: 17px;
}
.radio {
  width: 190px;
  height: 40px;
  margin: -2px -4px 0 auto;
}
.net {
  font-size: 18.5px;
  font-weight: 700;
  fill: #f4f5f7;
}
.percent {
  font-size: 40px;
  fill: #f4f5f7;
}
.arrows {
  fill: none;
  stroke: #f4f5f7;
  stroke-width: 2.8px;
}
.arrows.dim {
  opacity: 0.42;
}
.appbar {
  display: flex;
  align-items: center;
  height: 147px;
  padding-left: 42px;
}
.burger {
  color: #e1e5ea;
}
.logo {
  width: 330px;
  height: 120px;
  margin: 7px 0 0 265px;
  font-family: "Liberation Sans", Arial, sans-serif;
}
.search {
  flex: none;
  height: 152px;
  background: #c7e7ff;
}
.search-box {
  box-sizing: border-box;
  display: flex;
  align-items: center;
  justify-content: space-between;
  height: 152px;
  padding: 0 29px;
  border: 3px solid #004d6b;
  border-radius: 22px;
  color: #004d6b;
}
.hint {
  font-size: 45px;
  font-weight: 500;
  letter-spacing: 1.9px;
  color: #6399b7;
}
.map {
  position: relative;
  flex: 1;
}
.terrain {
  display: block;
  width: 1080px;
  height: 1958px;
}
.lines path {
  fill: none;
  stroke-linejoin: round;
  vector-effect: non-scaling-stroke;
}
.lines .minor-edge {
  stroke: #f3c04f;
  stroke-width: 4.5px;
}
.lines .minor {
  stroke: #ffe08b;
  stroke-width: 2px;
}
.lines .minor-edge.spain {
  stroke: #fbcb62;
  stroke-width: 3.2px;
}
.lines .minor.spain {
  stroke-width: 1px;
}
.lines .major-edge {
  stroke: #f5bd45;
  stroke-width: 7.5px;
}
.lines .major {
  stroke: #ffeba8;
  stroke-width: 4px;
}
.lines .border {
  stroke: #676b70;
  stroke-width: 2px;
}
.labels text {
  font-size: 38px;
  font-weight: 500;
  fill: #2a2b2e;
  stroke: #fff;
  stroke-opacity: 0.7;
  stroke-width: 7px;
  stroke-linejoin: round;
  paint-order: stroke;
}
.labels .big {
  font-size: 43px;
  font-weight: 700;
  fill: #17181a;
}
.labels .arabic {
  font-family: "DejaVu Sans", sans-serif;
  font-size: 33px;
  font-weight: 400;
}
.google text {
  font-family: "Open Sans", sans-serif;
  font-size: 46px;
  font-weight: 600;
  stroke: #fff;
  stroke-width: 4px;
  paint-order: stroke;
}
.bubble {
  position: absolute;
  left: 434px;
  top: 809px;
  width: 295px;
  height: 67px;
  background: #fff;
  box-shadow: 0 1px 3px rgba(0, 0, 0, 0.5);
  color: #000;
  font-size: 40px;
  font-weight: 700;
  letter-spacing: 0.2px;
  line-height: 69px;
  text-align: center;
}
.bubble::after {
  content: "";
  position: absolute;
  left: 136px;
  top: 66px;
  border: 11px solid transparent;
  border-top: 24px solid #fff;
}
.fab {
  position: absolute;
  left: 42px;
  top: 1768px;
  box-sizing: border-box;
  display: flex;
  align-items: center;
  gap: 21px;
  width: 335px;
  height: 147px;
  padding-left: 42px;
  border-radius: 42px;
  background: #004d6b;
  box-shadow: 0 8px 20px rgba(0, 0, 0, 0.35);
  color: #cfe6f8;
  font-size: 40px;
  font-weight: 500;
  letter-spacing: 0.6px;
}
.links,
.zoom {
  position: absolute;
  display: flex;
  background: rgba(255, 255, 255, 0.82);
  border-radius: 4px;
  box-shadow: 0 1px 5px rgba(0, 0, 0, 0.3);
}
.links {
  left: 710px;
  top: 1811px;
}
.links svg,
.zoom svg {
  display: block;
  width: 100px;
  height: 100px;
}
.links svg + svg {
  border-left: 2px solid #dcdcdc;
}
.zoom {
  left: 949px;
  top: 1711px;
  flex-direction: column;
}
.zoom svg + svg {
  box-shadow: 0 -2px 0 #e4e4e4;
}
.scrim {
  position: absolute;
  inset: 0;
  z-index: 1;
  background: rgba(0, 0, 0, 0.54);
}
.drawer {
  position: absolute;
  z-index: 2;
  left: 0;
  top: 0;
  box-sizing: border-box;
  width: 798px;
  height: 2340px;
  padding: 125px 42px 0;
  border-radius: 0 42px 42px 0;
  background: #384955;
}
.item {
  display: flex;
  align-items: center;
  height: 131.1px;
  color: #c1c7cf;
}
.item span {
  flex: 1;
  margin: 2px 0 0 43px;
  color: #cfe5f7;
  font-size: 39.5px;
  font-weight: 600;
  letter-spacing: 0;
}
.form {
  flex: 1;
  display: flex;
  flex-direction: column;
  padding: 0 42px;
}
h1 {
  margin: 103px 0 0;
  height: 128px;
  color: #92cdf6;
  font-size: 84px;
  font-weight: 600;
  line-height: 110px;
  text-align: center;
  letter-spacing: -1.2px;
}
.field {
  box-sizing: border-box;
  display: flex;
  align-items: center;
  flex: none;
  height: 152px;
  margin-top: 42px;
  padding: 0 28px 0 30px;
  border: 2.6px solid #8b9198;
  border-radius: 40px;
  color: #93cff8;
}
.field span {
  flex: 1;
  margin: -1px 0 0 32px;
  color: #c2c7cf;
  font-size: 46px;
  letter-spacing: 1.35px;
}
.counter {
  display: flex;
  align-items: center;
  justify-content: space-between;
  height: 210px;
  color: #e1e2e5;
}
.counter .poppins {
  font-size: 45px;
  font-weight: 600;
  letter-spacing: 1.4px;
}
.stepper {
  display: flex;
  align-items: center;
  gap: 32px;
  padding-right: 32px;
  color: #c2c7cf;
}
.stepper b {
  width: 22px;
  color: #e1e2e5;
  font-size: 40px;
  font-weight: 400;
}
.stepper .off {
  color: #5e6266;
}
.select {
  height: 147px;
  margin-top: 0;
  border-radius: 11px;
}
.caret {
  color: #b9b9b9;
}
.check {
  display: flex;
  align-items: center;
  height: 147px;
  margin-top: 63px;
  padding: 0 84px 0 42px;
  color: #93cff8;
}
.check span {
  flex: 1;
  margin: -1px 0 0 43px;
  color: #e1e2e5;
  font-size: 46px;
  letter-spacing: 1.35px;
}
.check .box {
  color: #c2c7cf;
}
.submit {
  display: flex;
  align-items: center;
  justify-content: center;
  gap: 21px;
  flex: none;
  height: 126px;
  margin-top: 63px;
  padding: 0;
  border: 0;
  border-radius: 63px;
  background: #181c20;
  box-shadow: 0 2px 4px rgba(0, 0, 0, 0.35);
  color: #93cff8;
  font: 500 40px Roboto, sans-serif;
  letter-spacing: 0.5px;
}
</style>
